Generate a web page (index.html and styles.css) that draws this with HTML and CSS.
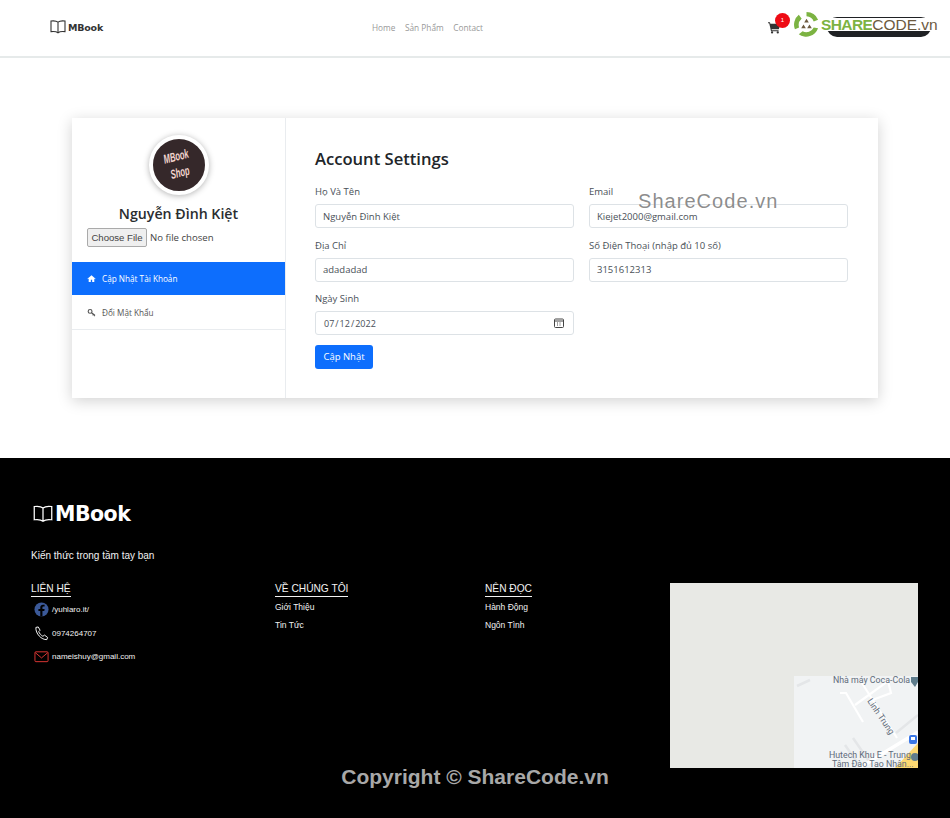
FILE: index.html
```html
<!DOCTYPE html>
<html lang="vi">
<head>
<meta charset="utf-8">
<title>MBook</title>
<link rel="stylesheet" href="styles.css">
</head>
<body>
<header class="topbar">
  <a class="brand">
    <svg class="brand-icon" viewBox="0 0 16 16" fill="none" stroke="currentColor" stroke-width="1.1"><path d="M8 3.2C6.6 2 4 1.600 1 2v10.600c3-.4 5.600 0 7 1.200 1.400-1.200 4-1.600 7-1.200V2c-3-.4-5.600 0-7 1.200zM8 3.200v10.600"/></svg>
    <span>MBook</span>
  </a>
  <nav class="topnav"><a>Home</a><a>Sản Phẩm</a><a>Contact</a></nav>
  <div class="top-right">
    <span class="cart">
      <svg viewBox="0 0 16 16" fill="#333"><path d="M0 1.500h2.400l.5 2H15l-1.600 6.500H4.400l.3 1.400H13v1.200H3.700L1.500 2.700H0z"/><circle cx="5" cy="14" r="1.400"/><circle cx="12" cy="14" r="1.400"/></svg>
      <b class="cart-badge">1</b>
    </span>
    <span class="user-pill"></span>
    <span class="sc-logo">
      <svg class="sc-mark" viewBox="0 0 28 28"><path d="M14 1a13 13 0 0 1 12 8l-4.500 2A8.500 8.500 0 0 0 14 5.500z" fill="#7cb342"/><path d="M6 4a13 13 0 0 0-4 15l4.300-2A8.500 8.500 0 0 1 9 8z" fill="#7cb342"/><path d="M6 24a13 13 0 0 0 20-6l-4.500-1A8.500 8.500 0 0 1 10 21z" fill="#7cb342"/><circle cx="14" cy="14" r="7.500" fill="#fff"/><path d="M14 8l2.400 4h-4.800zM8.500 18l2.400-4 2.400 4zM19.500 18l-2.400-4-2.400 4z" fill="#6d5a3f"/></svg>
      <span class="sc-share">SHARE</span><span class="sc-code">CODE.vn</span>
    </span>
  </div>
</header>

<main class="page">
  <section class="card">
    <aside class="side">
      <div class="avatar"><span>MBook<br>Shop</span></div>
      <h2 class="side-name">Nguyễn Đình Kiệt</h2>
      <input class="file" type="file">
      <ul class="tabs">
        <li class="tab active">
          <svg viewBox="0 0 16 16" fill="currentColor"><path d="M8 2 .8 8.400l.8.900L3 8.100V14h3.800v-4h2.400v4H13V8.100l1.400 1.200.8-.900z"/></svg>
          Cập Nhật Tài Khoản
        </li>
        <li class="tab">
          <svg viewBox="0 0 16 16" fill="none" stroke="currentColor" stroke-width="2"><circle cx="5.500" cy="6" r="3.400"/><path d="M8 8.500l6 4.500M11.500 11.200l-1.400 2M14 13l-1 1.500"/></svg>
          Đổi Mật Khẩu
        </li>
      </ul>
    </aside>
    <form class="settings">
      <h1 class="settings-title">Account Settings</h1>
      <div class="fields">
        <label class="field">Họ Và Tên<input class="input" type="text" value="Nguyễn Đình Kiệt"></label>
        <label class="field">Email<input class="input" type="text" value="Kiejet2000@gmail.com"></label>
        <label class="field">Địa Chỉ<input class="input" type="text" value="adadadad"></label>
        <label class="field">Số Điện Thoại (nhập đủ 10 số)<input class="input" type="text" value="3151612313"></label>
        <label class="field">Ngày Sinh<input class="input date" type="date" value="2022-07-12"></label>
      </div>
      <button class="save" type="button">Cập Nhật</button>
    </form>
  </section>
  <div class="watermark">ShareCode.vn</div>
</main>

<footer class="footer">
  <div class="foot-brand">
    <svg viewBox="0 0 16 16" fill="none" stroke="#fff" stroke-width="1"><path d="M8 3.200C6.600 2 4 1.600 1 2v10.600c3-.4 5.600 0 7 1.200 1.400-1.200 4-1.600 7-1.200V2c-3-.4-5.600 0-7 1.200zM8 3.200v10.600"/></svg>
    <span>MBook</span>
  </div>
  <p class="tagline">Kiến thức trong tầm tay bạn</p>
  <div class="foot-grid">
    <div>
      <h3 class="foot-head">LIÊN HỆ</h3>
      <ul class="contacts">
        <li><svg viewBox="0 0 16 16"><circle cx="8" cy="8" r="7.500" fill="#3b5998"/><path d="M9 15.400V9.600h2l.3-2.200H9V6c0-.7.3-1.100 1.100-1.100h1.200V3c-.5-.1-1.100-.1-1.700-.1-1.700 0-2.900 1-2.900 2.900v1.600h-2v2.200h2v5.800z" fill="#000"/></svg>/yuhlaro.it/</li>
        <li><svg viewBox="0 0 16 16" fill="none" stroke="#fff" stroke-width="1"><path d="M2 1.500 4.500 1l2 3.500-1.500 1.500c.8 2 2.400 3.800 4.500 5l1.700-1.300 3.300 2.500-.8 2.300C8 15 1.500 8 2 1.500z"/></svg>0974264707</li>
        <li><svg viewBox="0 0 16 16" fill="none" stroke="#e53935" stroke-width="1"><rect x="1" y="3" width="14" height="10.500" rx="1"/><path d="M1.500 4 8 9.500 14.500 4"/></svg>nameishuy@gmail.com</li>
      </ul>
    </div>
    <div>
      <h3 class="foot-head">VỀ CHÚNG TÔI</h3>
      <ul class="foot-links"><li>Giới Thiệu</li><li>Tin Tức</li></ul>
    </div>
    <div>
      <h3 class="foot-head">NÊN ĐỌC</h3>
      <ul class="foot-links"><li>Hành Động</li><li>Ngôn Tình</li></ul>
    </div>
    <svg class="map" viewBox="0 0 248 185">
      <rect width="248" height="185" fill="#e8e9e5"/>
      <rect x="124" y="93" width="124" height="92" fill="#f1f3f4"/>
      <g fill="none" stroke="#e4e6e8" stroke-width="2.500">
        <path d="M127 103l13-6M183 155l18 26M175 162l14 20M226 150l22-18"/>
      </g>
      <g fill="none" stroke="#fff" stroke-width="2.200">
        <path d="M170 110h6l17 29M190 97l37 58M185 122l33-24 3 12-24 9"/>
      </g>
      <path d="M248 149l-41 25-17 11" fill="none" stroke="#fff" stroke-width="3.500"/>
      <path d="M248 160l-23 25h23z" fill="#fbd872"/>
      <g fill="#5f6b7a" font-family="'Roboto','Liberation Sans',sans-serif" font-size="8.800">
        <text x="163" y="100">Nhà máy Coca-Cola</text>
        <text transform="translate(197 118) rotate(56)">Linh Trung</text>
        <text x="159" y="175">Hutech Khu E - Trung</text>
        <text x="162" y="184">Tâm Đào Tạo Nhân...</text>
      </g>
      <path d="M241 94h7v5l-3 5-4-5z" fill="#5f7d8c"/>
      <rect x="239" y="152" width="8" height="9" rx="2" fill="#3b78e7"/>
      <rect x="241" y="154" width="4" height="3" fill="#fff"/>
      <circle cx="245" cy="174" r="4" fill="#5f7d8c"/>
    </svg>
  </div>
  <div class="copyright">Copyright © ShareCode.vn</div>
</footer>
</body>
</html>
```
FILE: styles.css
```css
* { box-sizing: border-box; }
html, body { margin: 0; padding: 0; }
body {
  position: relative;
  width: 950px;
  height: 818px;
  overflow: hidden;
  background: #fff;
  font-family: "Open Sans", "Noto Sans", sans-serif;
  color: #212529;
}
ul { list-style: none; margin: 0; padding: 0; }
h1, h2, h3, p { margin: 0; }

/* top bar */
.topbar {
  display: grid;
  grid-template-columns: 322px 1fr auto;
  align-items: center;
  height: 58px;
  padding: 0 18px 2px 50px;
  border-bottom: 2px solid #e6eaea;
}
.brand { display: flex; align-items: center; gap: 2px; color: #333; font: 700 9.500px "DejaVu Sans", sans-serif; letter-spacing: -.2px; }
.brand-icon { width: 16px; height: 16px; }
.topnav { display: flex; gap: 9.500px; font-size: 8.300px; color: #999; }
.top-right { display: flex; align-items: center; position: relative; width: 164px; height: 40px; }
.cart { position: relative; display: block; width: 14px; height: 14px; margin-top: 2px; }
.cart svg { width: 13px; height: 13px; display: block; }
.cart-badge {
  position: absolute; left: 7px; top: -8px;
  width: 15px; height: 15px; border-radius: 50%;
  background: #ee0b14; color: #fff;
  font: 400 6px/15px "Liberation Sans", sans-serif; text-align: center;
}
.user-pill {
  position: absolute; left: 59px; top: 10px;
  width: 104px; height: 20px; border-radius: 10px;
  background: #1f2124;
}
.sc-logo { position: absolute; left: 25px; top: 4px; display: flex; align-items: center; white-space: nowrap; font-family: "Liberation Sans", sans-serif; }
.sc-mark { width: 27px; height: 27px; margin-right: 1px; }
.sc-share { color: #7cb342; background: #fff; font-size: 15.500px; line-height: 13px; font-weight: 700; letter-spacing: -.6px; }
.sc-code { color: #6d5a3f; background: #fff; font-size: 15.500px; line-height: 13px; }

/* main */
.page { position: relative; padding: 60px 72px; height: 400px; }
.card {
  display: flex;
  height: 280px;
  background: #fff;
  box-shadow: 0 3px 14px rgba(0, 0, 0, .18);
}
.side { width: 213px; flex: none; }
.avatar {
  display: flex; align-items: center; justify-content: center;
  width: 60px; height: 60px;
  margin: 17px auto 0;
  border: 4px solid #fff; border-radius: 50%;
  background: #35282a;
  box-shadow: 0 1px 6px rgba(0, 0, 0, .3);
  color: #f3d6cf;
  font: italic 700 8.500px/11px "Liberation Sans", sans-serif;
  text-align: center;
}
.avatar span { display: block; transform: rotate(-14deg) scale(.9, 1.5); }
.side-name { margin-top: 8px; font-size: 14.200px; font-weight: 600; line-height: 22px; text-align: center; color: #2a2d30; }
.file { display: block; margin: 3px 0 0 15px; font-size: 9.600px; font-family: "Open Sans", sans-serif; width: 190px; height: 20px; color: #444; }
.file::file-selector-button {
  width: 60px; height: 19px;
  margin-right: 3px; padding: 0;
  border: 1px solid #aaa; border-radius: 2px;
  background: #efefef; color: #444;
  font-size: 9.600px;
}
.tabs { margin-top: 14px; }
.tab {
  display: flex; align-items: center; gap: 6px;
  height: 34px;
  padding-left: 15px;
  border-bottom: 1px solid #e9ecef;
  font-size: 8.200px;
  color: #555;
}
.tab svg { width: 9px; height: 9px; flex: none; }
.tab.active { background: #0d6efd; color: #fff; border-bottom: 0; height: 33px; margin-bottom: 1px; }
.settings { flex: 1; padding: 29px 30px 0 29px; border-left: 1px solid #e9ecef; }
.settings-title { font-size: 16.600px; font-weight: 600; line-height: 24px; color: #212529; }
.fields { display: grid; grid-template-columns: 259px 259px; column-gap: 15px; row-gap: 10.500px; margin-top: 14px; }
.field { display: flex; flex-direction: column; gap: 5px; font-size: 9.500px; line-height: 14px; color: #495057; }
.input {
  width: 259px; height: 24px;
  padding: 0 7px;
  border: 1px solid #dde2e6; border-radius: 3px;
  background: #fff;
  font: 9.500px "Open Sans", sans-serif;
  color: #495057;
}
.date { font-size: 9px; }
.date::-webkit-calendar-picker-indicator {
  width: 10px; height: 10px; margin-right: 2px; padding: 0;
  background: url("data:image/svg+xml,%3Csvg xmlns='http://www.w3.org/2000/svg' viewBox='0 0 10 10' fill='none' stroke='%23444'%3E%3Crect x='.5' y='1' width='9' height='8.500' rx='1'/%3E%3Cpath d='M.5 3h9M3 5h1M5.500 5h1M3 7h1M5.500 7h1'/%3E%3C/svg%3E") center / contain no-repeat;
}
.save {
  display: block;
  width: 58px; height: 24px;
  margin-top: 9.500px; padding: 0;
  border: 0; border-radius: 3px;
  background: #0d6efd; color: #fff;
  font: 9.500px "Open Sans", sans-serif;
}
.watermark {
  position: absolute; left: 638px; top: 132px;
  color: rgba(120, 120, 120, .85);
  font: 20px "Liberation Sans", sans-serif;
  letter-spacing: 1.050px;
  text-shadow: 0 0 2px #fff;
}

/* footer */
.footer {
  position: relative;
  height: 360px;
  padding: 42px 32px 0 31px;
  background: #000;
  color: #f2f2f2;
  font-family: "Liberation Sans", Arial, sans-serif;
}
.foot-brand { display: flex; align-items: center; gap: 2px; margin-left: 2px; color: #fff; font: 700 20.500px/28px "DejaVu Sans", sans-serif; letter-spacing: -.5px; }
.foot-brand svg { width: 20px; height: 20px; }
.tagline { margin-top: 21px; font-size: 10px; line-height: 14px; }
.foot-grid {
  display: grid;
  grid-template-columns: 244px 210px 185px 248px;
  margin-top: 20px;
}
.foot-head { width: fit-content; padding-bottom: 1px; border-bottom: 1px solid #f2f2f2; font-size: 10.200px; font-weight: 400; line-height: 12px; }
.contacts { margin-top: 1px; }
.contacts li { display: flex; align-items: center; gap: 3px; height: 23.500px; font-size: 8px; padding-left: 3px; }
.contacts svg { width: 15px; height: 15px; flex: none; }
.foot-links { margin-top: 1px; }
.foot-links li { height: 18px; font-size: 8.500px; line-height: 18px; }
.map { display: block; width: 248px; height: 185px; }
.copyright {
  position: absolute; left: 0; right: 0; top: 307px;
  text-align: center;
  color: #a8a8a8;
  font-size: 21px; font-weight: 700; line-height: 24px;
}
```
